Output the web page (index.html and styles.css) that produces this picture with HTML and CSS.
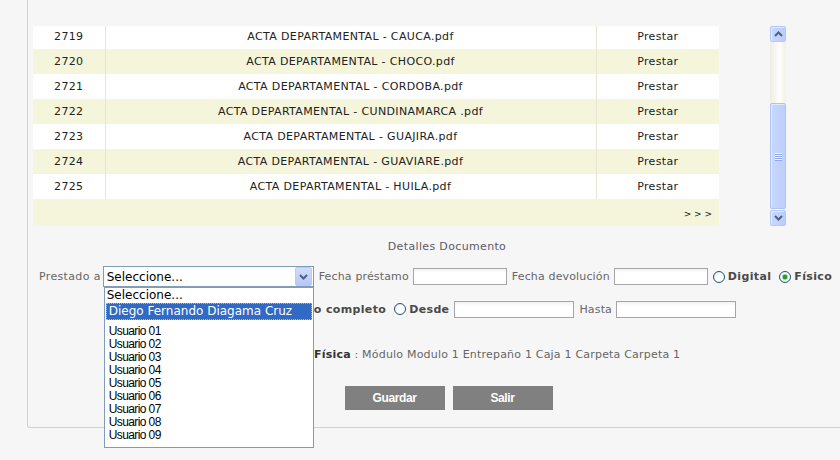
FILE: index.html
```html
<!DOCTYPE html>
<html lang="es">
<head>
    <meta charset="UTF-8">
    <meta name="viewport" content="width=device-width, initial-scale=1.0">
    <link rel="stylesheet" href="styles.css">
    <title>Préstamo de documentos</title>
</head>
<body>
    <section class="panel">
        <article class="grid">
            <div class="grid-view">
                <table class="docs">
                    <colgroup>
                        <col class="c-num">
                        <col class="c-name">
                        <col class="c-act">
                    </colgroup>
                    <tr><td>2719</td><td>ACTA DEPARTAMENTAL - CAUCA.pdf</td><td>Prestar</td></tr>
                    <tr><td>2720</td><td>ACTA DEPARTAMENTAL - CHOCO.pdf</td><td>Prestar</td></tr>
                    <tr><td>2721</td><td>ACTA DEPARTAMENTAL - CORDOBA.pdf</td><td>Prestar</td></tr>
                    <tr><td>2722</td><td>ACTA DEPARTAMENTAL - CUNDINAMARCA .pdf</td><td>Prestar</td></tr>
                    <tr><td>2723</td><td>ACTA DEPARTAMENTAL - GUAJIRA.pdf</td><td>Prestar</td></tr>
                    <tr><td>2724</td><td>ACTA DEPARTAMENTAL - GUAVIARE.pdf</td><td>Prestar</td></tr>
                    <tr><td>2725</td><td>ACTA DEPARTAMENTAL - HUILA.pdf</td><td>Prestar</td></tr>
                    <tr class="pager"><td colspan="3">&gt; &gt; &gt;</td></tr>
                </table>
            </div>
            <div class="scrollbar">
                <span class="sb-btn">
                    <svg width="9" height="6" viewBox="0 0 9 6"><path d="M1 5L4.5 1.5L8 5" fill="none" stroke="#4d6185" stroke-width="2"/></svg>
                </span>
                <span class="sb-track">
                    <span class="sb-thumb"><i></i><i></i><i></i><i></i></span>
                </span>
                <span class="sb-btn">
                    <svg width="9" height="6" viewBox="0 0 9 6"><path d="M1 1L4.5 4.5L8 1" fill="none" stroke="#4d6185" stroke-width="2"/></svg>
                </span>
            </div>
        </article>

        <p class="section-title">Detalles Documento</p>

        <div class="form-row row-loan">
            <span class="lbl first">Prestado a</span>
            <div class="combo">
                <span class="combo-text">Seleccione...</span>
                <span class="combo-btn">
                    <svg width="9" height="6" viewBox="0 0 9 6"><path d="M1 1L4.5 4.5L8 1" fill="none" stroke="#4d6185" stroke-width="2"/></svg>
                </span>
                <ul class="combo-list">
                    <li class="opt">Seleccione...</li>
                    <li class="opt active">Diego Fernando Diagama Cruz</li>
                    <li class="user gap">Usuario 01</li>
                    <li class="user">Usuario 02</li>
                    <li class="user">Usuario 03</li>
                    <li class="user">Usuario 04</li>
                    <li class="user">Usuario 05</li>
                    <li class="user">Usuario 06</li>
                    <li class="user">Usuario 07</li>
                    <li class="user">Usuario 08</li>
                    <li class="user">Usuario 09</li>
                </ul>
            </div>
            <span class="lbl">Fecha préstamo</span>
            <span class="field date"></span>
            <span class="lbl">Fecha devolución</span>
            <span class="field date"></span>
            <span class="radio near"></span>
            <b class="opt-lbl">Digital</b>
            <span class="radio checked"></span>
            <b class="opt-lbl">Físico</b>
        </div>

        <div class="form-row row-pages">
            <span class="radio"></span>
            <b class="opt-lbl">Documento completo</b>
            <span class="radio"></span>
            <b class="opt-lbl">Desde</b>
            <span class="field range from"></span>
            <span class="lbl">Hasta</span>
            <span class="field range"></span>
        </div>

        <p class="location"><b>Ubicación Física</b> : Módulo Modulo 1 Entrepaño 1 Caja 1 Carpeta Carpeta 1</p>

        <div class="actions">
            <button class="btn">Guardar</button>
            <button class="btn">Salir</button>
        </div>
    </section>
</body>
</html>
```

FILE: styles.css
```css
html{
    box-sizing: border-box;
    font-family: "DejaVu Sans", Verdana, sans-serif;
    font-size: 11px;
    letter-spacing: .35px;
}
*,
*:before,
*:after{
    box-sizing: inherit;
}
body{
    margin: 0;
    min-height: 100vh;
    background-color: #f6f6f6;
    color: #222;
}
.panel{
    margin-left: 27px;
    height: 428px;
    padding-top: 26px;
    border-left: 1px solid #d2d2ca;
    border-bottom: 1px solid #d2d2ca;
    border-bottom-left-radius: 3px;
}

/* grilla */
.grid{
    display: flex;
    padding-left: 5px;
}
.grid-view{
    width: 686px;
    height: 200px;
    overflow: hidden;
}
.docs{
    width: 686px;
    margin-top: -2px;
    border-collapse: collapse;
    table-layout: fixed;
}
.c-num{ width: 72px; }
.c-name{ width: 491px; }
.c-act{ width: 123px; }
.docs tr{
    background-color: #fff;
}
.docs tr:nth-child(even){
    background-color: #f5f5dc;
}
.docs td{
    height: 25px;
    padding: 0;
    text-align: center;
    border-right: 1px solid #e8e4cf;
}
.docs td:last-child{
    border-right: 0;
}
.docs .pager td{
    height: 27px;
    padding: 2px 7px 0 0;
    text-align: right;
    font-size: 9px;
    letter-spacing: 0;
    color: #111;
}

/* scroll estilo XP */
.scrollbar{
    display: flex;
    flex-direction: column;
    width: 16px;
    height: 200px;
    margin-left: 51px;
    background: linear-gradient(to right, #eeede5, #fdfdfa 60%, #f1f0ea);
}
.sb-btn{
    display: flex;
    align-items: center;
    justify-content: center;
    height: 16px;
    border: 1px solid #b4c8f6;
    border-radius: 2px;
    background: linear-gradient(to right, #c9d8fc, #b9cdfa);
    box-shadow: inset 1px 1px 0 #e3ebfe;
}
.sb-track{
    display: flex;
    flex-direction: column;
    justify-content: flex-end;
    flex-grow: 1;
    padding-bottom: 1px;
}
.sb-thumb{
    display: flex;
    flex-direction: column;
    align-items: center;
    justify-content: center;
    gap: 1px;
    height: 106px;
    border: 1px solid #aec3f3;
    border-radius: 2px;
    background: linear-gradient(to right, #c8d7fd, #bccffb);
    box-shadow: inset 1px 1px 0 #e1eafe;
}
.sb-thumb i{
    display: block;
    width: 7px;
    height: 1px;
    background-color: #eef3fe;
    box-shadow: 0 1px 0 #8fa9e8;
}

/* formulario */
.section-title{
    margin: 14px 0 0;
    padding-left: 26px;
    line-height: 14px;
    text-align: center;
    color: #5c5a66;
}
.form-row{
    display: flex;
    align-items: center;
}
.row-loan{
    height: 21px;
    margin-top: 12px;
    padding-left: 11px;
}
.row-pages{
    height: 18px;
    margin-top: 13px;
    padding-left: 197px;
}
.lbl{
    margin: 0 4px 0 5px;
    letter-spacing: .15px;
    color: #666;
    white-space: nowrap;
}
.lbl.first{
    margin: 0 2px 0 0;
    letter-spacing: .35px;
}
.opt-lbl{
    margin-left: 3px;
    color: #4a4a4a;
    white-space: nowrap;
}
.field{
    display: block;
    height: 17px;
    border: 1px solid #a6a6a6;
    background: linear-gradient(#f1f1f1, #fff 4px);
}
.date{
    width: 94px;
}
.range{
    width: 120px;
}
.range.from{
    margin-left: 5px;
}
.radio{
    display: block;
    flex-shrink: 0;
    width: 12px;
    height: 12px;
    margin-left: 8px;
    border: 1px solid #1c5180;
    border-radius: 50%;
    background: radial-gradient(circle at 65% 65%, #fff 40%, #dcdcd5);
}
.radio.near{
    margin-left: 5px;
}
.radio.checked{
    background: radial-gradient(circle, #21a121 0 2px, #8fd28f 2.5px, #fff 3.5px, #fff 55%, #dcdcd5);
}

/* combo abierto */
.combo{
    position: relative;
    display: flex;
    align-items: center;
    width: 211px;
    height: 21px;
    padding: 0 1px 0 3px;
    border: 1px solid #7f9db9;
    background-color: #fff;
    font-size: 12px;
    letter-spacing: 0;
    color: #000;
}
.combo-text{
    flex-grow: 1;
}
.combo-btn{
    display: flex;
    align-items: center;
    justify-content: center;
    width: 17px;
    height: 19px;
    border: 1px solid #b9cbf4;
    border-radius: 2px;
    background: linear-gradient(#d0dcfc, #b6c8f7);
}
.combo-list{
    position: absolute;
    top: 20px;
    left: 0;
    z-index: 2;
    width: 210px;
    height: 161px;
    margin: 0;
    padding: 0;
    overflow: hidden;
    list-style: none;
    border: 1px solid #7f9db9;
    background-color: #fff;
}
.opt{
    height: 15px;
    line-height: 15px;
    padding-left: 2px;
}
.opt.active{
    height: 17px;
    margin: 0 1px;
    padding-left: 2px;
    line-height: 15px;
    border: 1px dotted #d8b878;
    background-color: #316ac5;
    color: #fff;
}
.user{
    height: 13px;
    padding-left: 4px;
    line-height: 13px;
    font-family: "Liberation Sans", Arial, sans-serif;
    font-size: 12px;
    letter-spacing: -.6px;
}
.user.gap{
    margin-top: 5px;
}

.location{
    margin: 30px 0 0;
    padding-left: 220px;
    line-height: 13px;
    letter-spacing: .2px;
    color: #666;
}
.location b{
    color: #333;
}
.actions{
    display: flex;
    justify-content: center;
    gap: 8px;
    margin-top: 25px;
    padding-left: 29px;
}
.btn{
    width: 100px;
    height: 24px;
    padding: 0;
    border: 0;
    background-color: #808080;
    color: #fff;
    font-family: "Liberation Sans", Arial, sans-serif;
    font-size: 12px;
    font-weight: bold;
    letter-spacing: -.4px;
}
```
